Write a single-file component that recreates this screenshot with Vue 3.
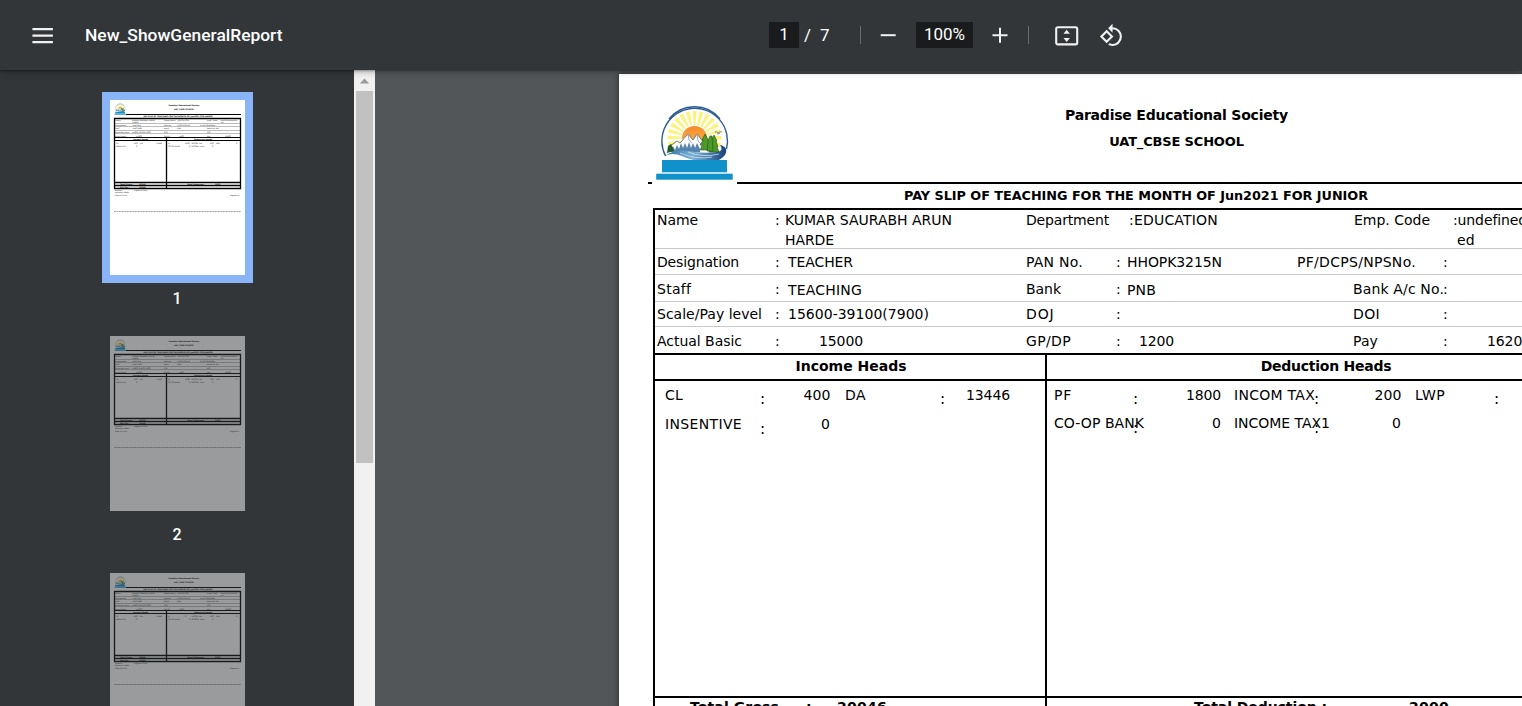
<script setup>
const PAGE_LEFT = 619

// Each cell: x = left edge on screen, t = text, w = drawn width, dy = vertical shift
const info = [
  { h: 37, lines: [
    { top: 2, cells: [
      { x: 657, t: 'Name', w: 40 }, { x: 775, t: ':' }, { x: 785, t: 'KUMAR SAURABH ARUN', w: 166 },
      { x: 1026, t: 'Department', w: 82 }, { x: 1129, t: ':EDUCATION', w: 88 },
      { x: 1354, t: 'Emp. Code', w: 75 }, { x: 1453, t: ':undefined', w: 73 }] },
    { top: 4, cells: [{ x: 785, t: 'HARDE', w: 48 }, { x: 1457, t: 'ed', w: 17 }] }] },
  { h: 25, lines: [{ top: 6, cells: [
    { x: 657, t: 'Designation', w: 81 }, { x: 775, t: ':' }, { x: 788, t: 'TEACHER', w: 64 },
    { x: 1026, t: 'PAN No.', w: 56 }, { x: 1116, t: ':' }, { x: 1127, t: 'HHOPK3215N', w: 94 },
    { x: 1297, t: 'PF/DCPS/NPSNo.', w: 118 }, { x: 1443, t: ':' }] }] },
  { h: 26, lines: [{ top: 7, cells: [
    { x: 657, t: 'Staff', w: 33 }, { x: 775, t: ':' }, { x: 788, t: 'TEACHING', w: 73, dy: 1 },
    { x: 1026, t: 'Bank', w: 34 }, { x: 1116, t: ':' }, { x: 1127, t: 'PNB', w: 28, dy: 1 },
    { x: 1353, t: 'Bank A/c No.', w: 90 }, { x: 1443, t: ':' }] }] },
  { h: 24, lines: [{ top: 5, cells: [
    { x: 657, t: 'Scale/Pay level', w: 104 }, { x: 775, t: ':' }, { x: 788, t: '15600-39100(7900)', w: 140 },
    { x: 1026, t: 'DOJ', w: 27.5 }, { x: 1116, t: ':' }, { x: 1353, t: 'DOI', w: 26 }, { x: 1443, t: ':' }] }] },
  { h: 26, lines: [{ top: 7, cells: [
    { x: 657, t: 'Actual Basic', w: 84 }, { x: 775, t: ':' }, { x: 819, t: '15000', w: 43 },
    { x: 1026, t: 'GP/DP', w: 44 }, { x: 1116, t: ':' }, { x: 1139, t: '1200', w: 34 },
    { x: 1353, t: 'Pay', w: 24 }, { x: 1443, t: ':' }, { x: 1487, t: '16200', w: 43 }] }] },
]

const heads = [
  { top: 7, cells: [
    { x: 665, t: 'CL', w: 17 }, { x: 760, t: ':', dy: 4, b: 1 }, { x: 803.5, t: '400', w: 26 }, { x: 845, t: 'DA', w: 20 },
    { x: 940, t: ':', dy: 4, b: 1 }, { x: 966, t: '13446', w: 43 },
    { x: 1054, t: 'PF', w: 17 }, { x: 1133, t: ':', dy: 4, b: 1 }, { x: 1186, t: '1800', w: 34 },
    { x: 1234, t: 'INCOM TAX', w: 80 }, { x: 1314, t: ':', dy: 4, b: 1 }, { x: 1374.5, t: '200', w: 26 },
    { x: 1415, t: 'LWP', w: 29 }, { x: 1494, t: ':', dy: 4, b: 1 }] },
  { top: 12, cells: [
    { x: 665, t: 'INSENTIVE', w: 76, dy: 1 }, { x: 760, t: ':', dy: 6, b: 1 }, { x: 821, t: '0', dy: 1 },
    { x: 1054, t: 'CO-OP BANK', w: 89 }, { x: 1133, t: ':', dy: 5, b: 1 }, { x: 1212, t: '0' },
    { x: 1234, t: 'INCOME TAX1', w: 95 }, { x: 1314, t: ':', dy: 5, b: 1 }, { x: 1392, t: '0' }] },
]

const totals = [
  { x: 690, t: 'Total Gross', w: 88 }, { x: 806, t: ':' }, { x: 837, t: '20046', w: 49 },
  { x: 1194, t: 'Total Deduction :', w: 132 }, { x: 1409, t: '2000', w: 39 },
]

const indent = (cells) => ({ paddingLeft: cells[0].x - PAGE_LEFT + 'px' })
const place = (cells, i) => ({
  width: (cells[i + 1] ? cells[i + 1].x : cells[i].x + 60) - cells[i].x + 'px',
  paddingTop: (cells[i].dy || 0) + 'px',
})

const vFit = {
  mounted(el, { value }) {
    if (!value) return
    const natural = el.getBoundingClientRect().width
    el.style.letterSpacing = (value + 1 - natural) / el.textContent.length + 'px'
  },
}

const thumbs = [
  { n: 1, active: true, ded: '1800' },
  { n: 2, active: false, ded: '1800' },
  { n: 3, active: false, ded: '0' },
]
const rays = Array.from({ length: 15 }, (_, i) => -194 + i * 14.9)
</script>

<template>
  <div class="viewer">
    <svg class="defs" width="0" height="0">
      <defs>
        <linearGradient id="sun" x1="0" y1="0" x2="0" y2="1">
          <stop offset="0" stop-color="#f58a2c" /><stop offset="1" stop-color="#fdc14e" />
        </linearGradient>
        <linearGradient id="water" x1="0" y1="0" x2="1" y2="0">
          <stop offset="0" stop-color="#2c6aa3" /><stop offset=".45" stop-color="#7db2d6" /><stop offset="1" stop-color="#17427c" />
        </linearGradient>
        <symbol id="crest" viewBox="0 0 100 95">
          <g fill="#fdf27c">
            <path v-for="a in rays" :key="a" d="M13 -.8L27 -2V2L13 .8z" :transform="`translate(49.5 43) rotate(${a})`" />
          </g>
          <circle cx="49.5" cy="43.5" r="12.6" fill="url(#sun)" />
          <path d="M20 57 L24 50 L28 51 L32 46 L35 47 L43 39 L48 45 L52 39 L59 48 L66 55 L60 60 L40 58 Z" fill="#fff" />
          <path d="M24 51 L28 49 L32 46 L35 48 L43 39 L48 45 L52 39 L59 48" fill="none" stroke="#4c6376" stroke-width=".8" />
          <path d="M43 39 L44 45 L47 48 M52 39 L53 46 L57 50" stroke="#9baec0" stroke-width="1" fill="none" />
          <path d="M26 56 l2 -5 l2 4 l2 -5 l2 4 l2 -6 l2 5 l2 -5 l2 5 l2 -6 l2 6 l2 -5 l2 5 l2 -5 l3 6 v3 h-29z" fill="#5584ad" />
          <path d="M20 61 Q30 54 43 56 Q58 59 72 57 Q79 56 75 50 Q84 52 80 60 Q73 69 58 67 Q46 65 37 61 Q27 57 20 61Z" fill="url(#water)" />
          <path d="M35 58 Q51 65 67 62 M43 57 Q58 63 74 59" fill="none" stroke="#c6e1f2" stroke-width=".8" />
          <path d="M22 58 l1 -7 l3 -2 l2 4 l1 3z" fill="#235b2c" />
          <g fill="#4d9a29" stroke="#24501b" stroke-width=".6">
            <path d="M60 39 l-3 6 l1.200 0 l-3 5 l2 0 l-2 5 h9 l-1 -5 l1 0 l-2 -5 l1 0z" />
            <path d="M69 40 l-3 6 l1 0 l-3 6 l2 0 l-2 5 h10 l-2 -5 l1 0 l-2 -6 l1 0z" />
            <path d="M65 41 l-2 5 l1 0 l-2 5 l1 0 l-1 5 h6 l-1 -15z" />
          </g>
          <path d="M20.500 61 A32.800 32.800 0 1 1 81.500 54" fill="none" stroke="#2c5c94" stroke-width="1.400" />
          <path d="M24 24 A32.800 32.800 0 0 1 75 24" fill="none" stroke="#2c5c94" stroke-width="1.500" />
          <path d="M70 37 q2 -1 3 1 q2 -2 4 -1 M72 39 q2 0 3 -1" fill="none" stroke="#53606b" stroke-width=".7" />
          <rect x="17" y="65" width="65" height="12.300" fill="#1191c9" />
          <rect x="11.200" y="78.700" width="76.500" height="6" fill="#1191c9" />
        </symbol>
      </defs>
    </svg>

    <header class="toolbar">
      <svg class="menu" width="22" height="16" viewBox="0 0 22 16"><path d="M.4 0h20.500v2.300H.4zM.4 6.500h20.500v2.300H.4zM.4 12.900h20.500v2.300H.4z" fill="#f1f1f1" /></svg>
      <h1 v-fit="196.5">New_ShowGeneralReport</h1>
      <div class="controls">
        <span class="field page-no">1</span>
        <span class="slash">/</span>
        <span class="count">7</span>
        <i class="sep"></i>
        <svg class="minus" width="16" height="16"><path d="M.7 7.200h15v2H.7z" fill="#f1f1f1" /></svg>
        <span class="field zoom"><span v-fit="40">100%</span></span>
        <svg class="plus" width="16" height="16"><path d="M.5 7.200h15v2H.5zM7 .7h2v15H7z" fill="#f1f1f1" /></svg>
        <i class="sep second"></i>
        <svg class="fitpage" width="24" height="20" viewBox="0 0 24 20">
          <rect x="1.200" y="1.200" width="21" height="17.200" rx="1.600" fill="none" stroke="#f1f1f1" stroke-width="2.100" />
          <path d="M11.700 3.800l3.200 4h-6.400zM11.700 16l3.200-4h-6.400z" fill="#f1f1f1" />
        </svg>
        <svg class="rotate" width="25" height="25" viewBox="0 0 24 24"><path fill="#f1f1f1" d="M7.340 6.410L.86 12.900l6.490 6.480 6.490-6.480-6.500-6.490zM3.690 12.900l3.660-3.660L11 12.900l-3.660 3.660-3.650-3.660zm15.670-6.260A8.950 8.950 0 0 0 13 4V.76L8.760 5 13 9.240V6c1.790 0 3.580.68 4.950 2.050a7.007 7.007 0 0 1 0 9.900 6.973 6.973 0 0 1-7.790 1.440l-1.490 1.490C10.020 21.620 11.510 22 13 22c2.300 0 4.610-.88 6.360-2.640a8.980 8.980 0 0 0 0-12.720z" /></svg>
      </div>
    </header>

    <div class="body">
      <aside class="sidebar">
        <div v-for="t in thumbs" :key="t.n" class="thumb" :class="{ active: t.active }">
          <div class="sheet">
            <svg width="135" height="175" viewBox="0 0 135 175">
              <use href="#crest" x="2.800" y="2" width="15" height="14.250" />
              <g font-weight="bold" font-size="1.900" text-anchor="middle">
                <text x="74" y="6.200">Paradise Educational Society</text>
                <text x="74" y="10">UAT_CBSE SCHOOL</text>
                <text x="68" y="17.200">PAY SLIP OF TEACHING FOR THE MONTH OF Jun2021 FOR JUNIOR</text>
                <text x="30.500" y="40">Income Heads</text><text x="93" y="40">Deduction Heads</text>
              </g>
              <path d="M16 14.500H131M4 37.500h127M4 40.500h127" stroke="#000" stroke-width="1" />
              <path d="M4 23.500h127M4 26.500h127M4 30.500h127M4 33.500h127" stroke="#777" stroke-width=".5" />
              <path d="M4.500 18.500h126v70h-126zM56.500 38v50.500M4.500 82.500h126M4.500 85.500h126" fill="none" stroke="#000" stroke-width="1.300" />
              <g font-size="1.900" fill="#111">
                <text x="5" y="20.700">Name</text><text x="22" y="20.700">KUMAR SAURABH ARUN</text><text x="22" y="23">HARDE</text>
                <text x="54" y="20.700">Department</text><text x="67" y="20.700">:EDUCATION</text><text x="97" y="20.700">Emp. Code</text><text x="110" y="20.700">:undefinedundefin</text><text x="111" y="23">ed</text>
                <text x="5" y="26">Designation</text><text x="22" y="26">TEACHER</text><text x="54" y="26">PAN No.</text><text x="67" y="26">HHOPK3215N</text><text x="90" y="26">PF/DCPS/NPSNo.</text>
                <text x="5" y="29.300">Staff</text><text x="22" y="29.300">TEACHING</text><text x="54" y="29.300">Bank</text><text x="67" y="29.300">PNB</text><text x="97" y="29.300">Bank A/c No.</text>
                <text x="5" y="33">Scale/Pay level</text><text x="22" y="33">15600-39100(7900)</text><text x="54" y="33">DOJ</text><text x="97" y="33">DOI</text>
                <text x="5" y="36.500">Actual Basic</text><text x="26" y="36.500">15000</text><text x="54" y="36.500">GP/DP</text><text x="69" y="36.500">1200</text><text x="97" y="36.500">Pay</text><text x="115" y="36.500">16200</text>
                <text x="6" y="43.600">CL</text><text x="24" y="43.600">400</text><text x="30" y="43.600">DA</text><text x="46" y="43.600">13446</text>
                <text x="58" y="43.600">PF</text><text x="75" y="43.600">{{ t.ded }}</text><text x="81.500" y="43.600">INCOM TAX</text><text x="100" y="43.600">200</text><text x="106" y="43.600">LWP</text><text x="126" y="43.600">0</text>
                <text x="6" y="47.300">INSENTIVE</text><text x="26" y="47.300">0</text><text x="58" y="47.300">CO-OP BANK</text><text x="79" y="47.300">0</text><text x="81.500" y="47.300">INCOME TAX1</text><text x="102" y="47.300">0</text>
                <g font-weight="bold"><text x="10" y="84.900">Total Gross :</text><text x="29" y="84.900">20046</text><text x="77" y="84.900">Total Deduction :</text><text x="105" y="84.900">2000</text><text x="10" y="88">Net Pay :</text><text x="29" y="88">18046</text></g>
                <text x="5" y="91">Rupees :</text><text x="24" y="91">Eighteen Only</text><text x="5" y="93.400">Payment Mode</text><text x="5" y="96.200">Date of Print</text><text x="120" y="96.200">Signature</text>
              </g>
              <path d="M4 111.500h127" stroke="#777" stroke-width=".7" stroke-dasharray="1.200 .4" />
            </svg>
          </div>
          <span class="num">{{ t.n }}</span>
        </div>
      </aside>
      <div class="scroll"><svg width="21" height="21"><path d="M5.800 13.500l4.700-5 4.700 5z" fill="#9b9b9b" /></svg><div class="grip"></div></div>

      <main class="canvas">
        <article class="paper">
          <div class="heading">
            <svg class="logo" width="100" height="95"><use href="#crest" width="100" height="95" /></svg>
            <div class="school">
              <b v-fit="222">Paradise Educational Society</b>
              <b class="small" v-fit="133.5">UAT_CBSE SCHOOL</b>
            </div>
          </div>
          <div class="rule"><i class="stub"></i><i class="long"></i></div>
          <div class="title"><b v-fit="463">PAY SLIP OF TEACHING FOR THE MONTH OF Jun2021 FOR JUNIOR</b></div>
          <section class="table">
            <div class="info">
              <div v-for="(row, r) in info" :key="r" class="row" :style="{ height: row.h + 'px' }">
                <div v-for="(line, l) in row.lines" :key="l" class="line" :style="[indent(line.cells), { marginTop: line.top + 'px' }]">
                  <span v-for="(c, i) in line.cells" :key="i" class="cell" :style="place(line.cells, i)"><span v-fit="c.w">{{ c.t }}</span></span>
                </div>
              </div>
            </div>
            <div class="titles">
              <div class="left"><b v-fit="110">Income Heads</b></div>
              <div class="right"><b v-fit="129.5">Deduction Heads</b></div>
            </div>
            <div class="heads">
              <div v-for="(line, l) in heads" :key="l" class="line" :style="[indent(line.cells), { marginTop: line.top + 'px' }]">
                <span v-for="(c, i) in line.cells" :key="i" class="cell" :class="{ colon: c.b }" :style="place(line.cells, i)"><span v-fit="c.w">{{ c.t }}</span></span>
              </div>
            </div>
            <div class="line totals" :style="indent(totals)">
              <span v-for="(c, i) in totals" :key="i" class="cell" :style="place(totals, i)"><span v-fit="c.w">{{ c.t }}</span></span>
            </div>
          </section>
        </article>
      </main>
    </div>
  </div>
</template>

<style>
body { margin: 0; overflow: hidden; }
</style>

<style scoped>
.viewer { width: 1522px; height: 706px; overflow: hidden; display: flex; flex-direction: column; background: #525659; font-family: Verdana, "DejaVu Sans", sans-serif; }
.viewer *, .viewer { box-sizing: border-box; }
svg { display: block; flex: none; }
.defs { position: absolute; }
.toolbar { position: relative; z-index: 2; height: 70px; flex: none; display: flex; align-items: center; padding-left: 32px; background: #323639; color: #fff; font-family: Roboto, sans-serif; box-shadow: 0 -2px 8px rgba(0,0,0,.09), 0 4px 8px rgba(0,0,0,.06), 0 1px 2px rgba(0,0,0,.3), 0 2px 6px rgba(0,0,0,.15); }
.toolbar h1 { margin: 0 0 0 31px; width: max-content; font-size: 17.400px; font-weight: 500; line-height: 20px; white-space: nowrap; }
.menu { margin-top: 1px; }
.controls { display: flex; align-items: center; margin-left: auto; width: 753px; font-size: 17px; height: 70px; }
.field { background: #191b1c; height: 26px; line-height: 25px; text-align: center; display: block; }
.page-no { width: 30px; }
.zoom { width: 57px; margin-left: 20px; }
.slash { width: 7px; margin-left: 5px; }
.count { width: 11px; margin-left: 9px; }
.sep { width: 1px; height: 18px; background: #6b6e70; margin-left: 29px; }
.sep.second { margin-left: 20px; }
.minus { margin-left: 19px; }
.plus { margin-left: 19px; }
.fitpage { margin-left: 26px; margin-top: 1px; }
.rotate { margin-left: 20px; margin-top: 1px; }
.body { flex: 1; min-height: 0; display: flex; }
.sidebar { width: 354px; height: 636px; overflow: hidden; background: #323639; display: flex; flex-direction: column; align-items: center; padding-top: 22px; }
.thumb { flex: none; width: 151px; height: 236.400px; display: flex; flex-direction: column; align-items: center; }
.sheet { border: 8px solid transparent; height: 191px; width: 151px; }
.sheet svg { background: #fff; opacity: .5; font-family: "DejaVu Sans", sans-serif; }
.active .sheet { background: #8ab4f8; }
.active .sheet svg { opacity: 1; }
.num { color: #fff; font: 500 16px/20px Roboto, sans-serif; margin-top: 5.600px; }
.scroll { width: 21px; background: #f1f1f1; }
.grip { height: 372px; margin: 0 2px; background: #c1c1c1; }
.canvas { flex: 1; min-width: 0; overflow: hidden; padding: 4px 0 0 244px; }
.paper { width: 1020px; height: 1322px; background: #fff; box-shadow: 0 0 5px rgba(0,0,0,.55); font-size: 14px; color: #000; }
.paper b, .totals { font-weight: bold; white-space: nowrap; }
.heading { height: 108px; display: flex; }
.logo { margin: 21px 0 -8px 26px; }
.school { width: 863px; display: flex; flex-direction: column; align-items: center; padding-top: 32px; line-height: 18px; }
.school b { width: max-content; font-size: 14px; }
.school .small { margin-top: 10px; font-size: 13px; line-height: 16px; }
.rule { height: 2px; display: flex; padding-left: 29px; }
.stub { width: 4px; height: 2px; background: #000; }
.long { flex: 1; margin-left: 85px; background: #000; }
.title { height: 25px; width: 1034px; text-align: center; line-height: 24px; font-size: 12.800px; }
.table { position: relative; margin-top: -1px; }
.table::before { content: ""; position: absolute; left: 34px; top: 0; width: 952px; height: 700px; border: 2px solid #000; pointer-events: none; }
.info { padding-top: 3px; border-bottom: 2px solid #000; margin-left: 34px; }
.row { border-bottom: 1px solid #c9c9c9; box-sizing: content-box; display: flow-root; margin-left: 1px; }
.row .line { margin-left: -35px; }
.row:last-child { border: 0; }
.line { display: flex; height: 16px; line-height: 14px; white-space: nowrap; }
.cell { flex: none; display: block; }
.colon { font-size: 15.500px; }
.titles { display: flex; height: 26px; margin-left: 34px; border-bottom: 2px solid #000; line-height: 23px; text-align: center; }
.left { width: 394px; border-right: 2px solid #000; padding-left: 4px; }
.right { width: 558px; }
.heads { height: 317px; border-bottom: 2px solid #000; margin-left: 34px; background: linear-gradient(#000, #000) 392px 0 / 2px 100% no-repeat; display: flow-root; }
.heads .line { margin-left: -34px; }
.totals { padding-top: 0; height: 22px; line-height: 18px; background: linear-gradient(#000, #000) 426px 0 / 2px 100% no-repeat; }
</style>
